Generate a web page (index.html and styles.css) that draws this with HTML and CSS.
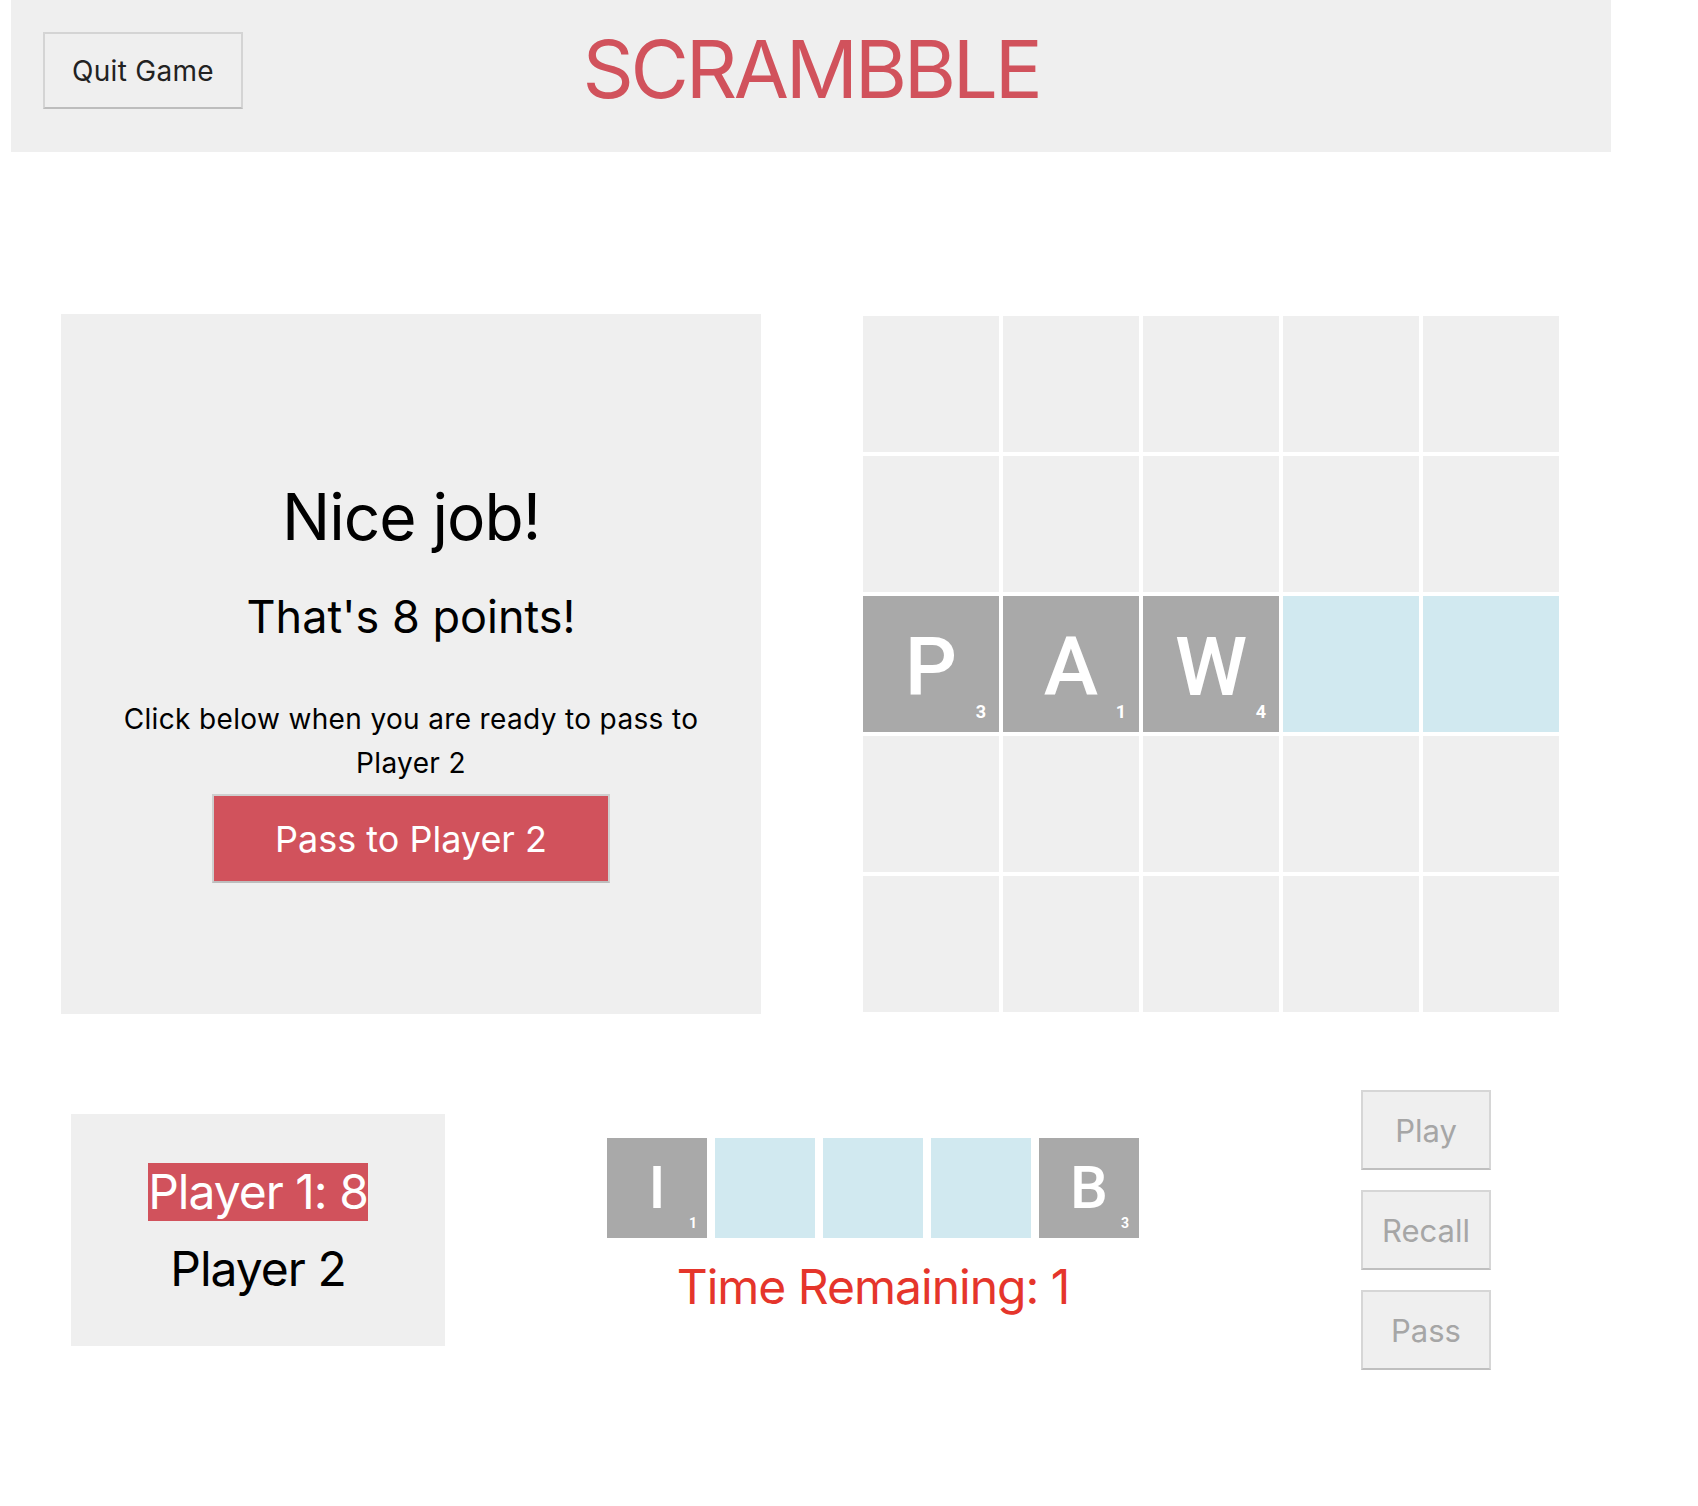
FILE: index.html
```html
<!DOCTYPE html>
<html lang="en">
<head>
<meta charset="utf-8">
<title>Scrambble</title>
<link rel="stylesheet" href="styles.css">
</head>
<body>
<div class="app">
  <header class="topbar">
    <button class="btn quit">Quit Game</button>
    <h1 class="title">SCRAMBBLE</h1>
    <div class="topbar-spacer"></div>
  </header>

  <main class="play">
    <section class="panel">
      <h2 class="panel-head">Nice job!</h2>
      <p class="panel-score">That's 8 points!</p>
      <p class="panel-note">Click below when you are ready to pass to Player 2</p>
      <button class="btn pass">Pass to Player 2</button>
    </section>

    <div class="board">
      <div class="cell"></div><div class="cell"></div><div class="cell"></div><div class="cell"></div><div class="cell"></div>
      <div class="cell"></div><div class="cell"></div><div class="cell"></div><div class="cell"></div><div class="cell"></div>
      <div class="cell tile"><span class="letter">P</span><span class="pts">3</span></div>
      <div class="cell tile"><span class="letter">A</span><span class="pts">1</span></div>
      <div class="cell tile"><span class="letter">W</span><span class="pts">4</span></div>
      <div class="cell slot"></div>
      <div class="cell slot"></div>
      <div class="cell"></div><div class="cell"></div><div class="cell"></div><div class="cell"></div><div class="cell"></div>
      <div class="cell"></div><div class="cell"></div><div class="cell"></div><div class="cell"></div><div class="cell"></div>
    </div>
  </main>

  <section class="controls">
    <div class="scores">
      <span class="player active">Player 1: 8</span>
      <span class="player">Player 2</span>
    </div>

    <div class="rack-wrap">
      <div class="rack">
        <div class="rtile tile"><span class="letter">I</span><span class="pts">1</span></div>
        <div class="rtile slot"></div>
        <div class="rtile slot"></div>
        <div class="rtile slot"></div>
        <div class="rtile tile"><span class="letter">B</span><span class="pts">3</span></div>
      </div>
      <div class="timer">Time Remaining: 1</div>
    </div>

    <div class="actions">
      <button class="btn act" disabled>Play</button>
      <button class="btn act" disabled>Recall</button>
      <button class="btn act" disabled>Pass</button>
    </div>
  </section>
</div>
</body>
</html>
```

FILE: styles.css
```css
body {
  margin: 0;
  background: #ffffff;
  font-family: "Inter", "Noto Sans", sans-serif;
  color: #000;
}

.app {
  width: 1600px;
  margin-left: 11px;
}

/* ---------- header ---------- */
.topbar {
  display: grid;
  grid-template-columns: 1fr auto 1fr;
  align-items: start;
  height: 152px;
  box-sizing: border-box;
  padding: 32px;
  background: #efefef;
}

.btn {
  font-family: "Inter", "Noto Sans", sans-serif;
  padding: 0;
  cursor: pointer;
}

.quit {
  justify-self: start;
  width: 200px;
  height: 77px;
  font-size: 28px;
  letter-spacing: 0.3px;
  color: #222;
  background: #efefef;
  border: 2px solid #d4d4d4;
  border-bottom-color: #bdbdbd;
}

.title {
  margin: 0;
  font-size: 80px;
  font-weight: 400;
  line-height: 74px;
  letter-spacing: -3.3px;
  color: #d1525c;
}

/* ---------- main row ---------- */
.play {
  display: flex;
  align-items: center;
  gap: 100px;
  margin-top: 162px;
  padding: 0 50px;
}

.panel {
  width: 700px;
  height: 700px;
  box-sizing: border-box;
  padding-top: 164px;
  background: #efefef;
  display: flex;
  flex-direction: column;
  align-items: center;
  text-align: center;
}

.panel-head {
  margin: 0;
  font-size: 64px;
  font-weight: 400;
  line-height: 78px;
  letter-spacing: -1px;
}

.panel-score {
  margin: 34px 0 0;
  font-size: 45px;
  line-height: 54px;
}

.panel-note {
  margin: 53px 0 0;
  width: 620px;
  font-size: 28px;
  line-height: 44px;
  letter-spacing: 0.35px;
}

.pass {
  margin-top: 9px;
  width: 398px;
  height: 89px;
  font-size: 36px;
  color: #fff;
  background: #d1525c;
  border: 2px solid #cfcfcf;
  border-bottom-color: #bdbdbd;
}

/* ---------- board ---------- */
.board {
  display: grid;
  grid-template-columns: repeat(5, 136px);
  grid-auto-rows: 136px;
  gap: 4px;
  padding: 2px;
}

.cell {
  background: #efefef;
}

.tile {
  position: relative;
  background: #a9a9a9;
  color: #fff;
  display: flex;
  align-items: center;
  justify-content: center;
  font-family: "Roboto", "Liberation Sans", Arial, sans-serif;
  font-weight: 500;
}

.slot {
  background: #d1e9f0;
}

.cell.tile .letter {
  font-size: 82px;
  line-height: 1;
  padding-top: 5px;
}

.tile .pts {
  font-weight: 700;
}

.cell.tile .pts {
  position: absolute;
  right: 13px;
  bottom: 11px;
  font-size: 18px;
  line-height: 1;
}

/* ---------- bottom controls ---------- */
.controls {
  display: flex;
  align-items: center;
  margin-top: 76px;
  padding-left: 60px;
}

.scores {
  width: 374px;
  height: 232px;
  background: #efefef;
  display: flex;
  flex-direction: column;
  align-items: center;
  justify-content: center;
  gap: 19px;
}

.player {
  font-size: 48px;
  line-height: 58px;
  letter-spacing: -1px;
}

.player.active {
  background: #d1525c;
  color: #fff;
}

.rack-wrap {
  margin-left: 162px;
  width: 532px;
  padding-bottom: 6px;
  display: flex;
  flex-direction: column;
  align-items: center;
}

.rack {
  display: flex;
  gap: 8px;
}

.rtile {
  width: 100px;
  height: 100px;
}

.rtile.tile .letter {
  font-size: 60px;
  line-height: 1;
}

.rtile.tile .pts {
  position: absolute;
  right: 10px;
  bottom: 8px;
  font-size: 14px;
  line-height: 1;
}

.timer {
  margin-top: 20px;
  font-size: 48px;
  line-height: 58px;
  letter-spacing: -1px;
  color: #e5352b;
}

.actions {
  margin-left: 222px;
  display: flex;
  flex-direction: column;
  gap: 20px;
}

.act {
  width: 130px;
  height: 80px;
  font-size: 31px;
  color: #a6a6a6;
  background: #efefef;
  border: 2px solid #d6d6d6;
  border-bottom-color: #bfbfbf;
  cursor: default;
}
```
